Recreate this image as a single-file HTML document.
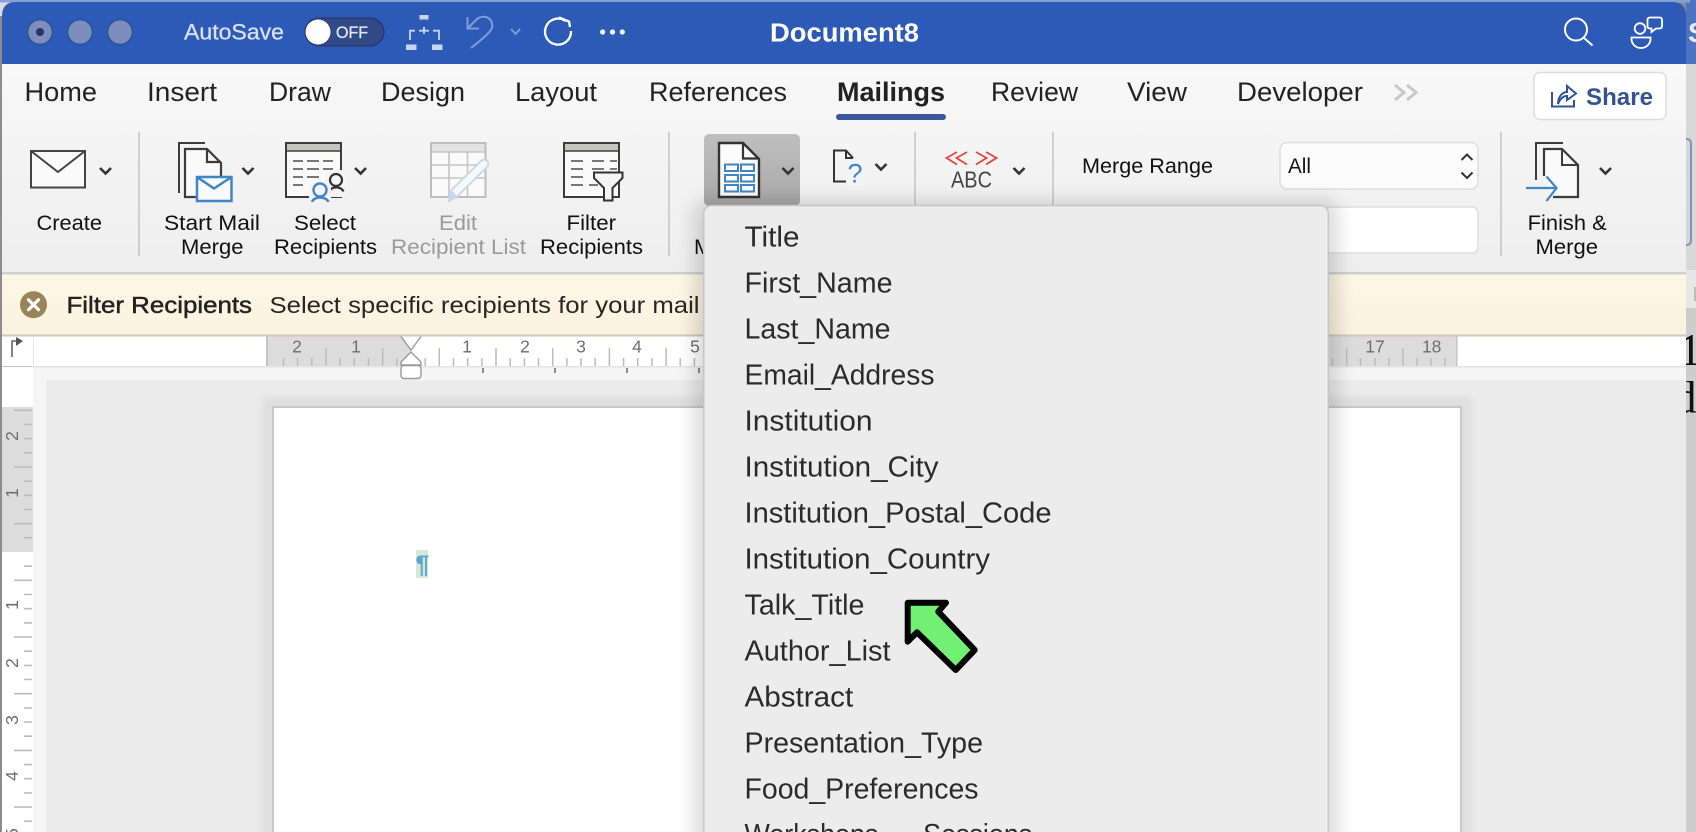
<!DOCTYPE html>
<html lang="en"><head><meta charset="utf-8"><title>Document8</title>
<style>
html,body{margin:0;padding:0;background:#fff;width:1696px;height:832px;overflow:hidden}
svg{display:block}
text{font-family:"Liberation Sans",sans-serif;white-space:pre}
.tab{font-size:26.5px;fill:#222}
.rb{font-size:21.5px;fill:#111}
.dis{fill:#9a9a9a}
.mi{font-size:28.5px;fill:#2b2b2b}
.rn{font-size:17.5px;fill:#6e6e6e}
.chev{fill:none;stroke:#333;stroke-width:2.6}
.sep{stroke:#cfcfcf;stroke-width:2}
</style></head><body>
<svg xmlns="http://www.w3.org/2000/svg" width="1696" height="832" viewBox="0 0 1696 832">
<defs>
<linearGradient id="rib" x1="0" y1="0" x2="0" y2="1"><stop offset="0" stop-color="#f8f8f8"/><stop offset="1" stop-color="#eeeeee"/></linearGradient>
<linearGradient id="yel" x1="0" y1="0" x2="0" y2="1"><stop offset="0" stop-color="#fef7e3"/><stop offset="1" stop-color="#f9f2de"/></linearGradient>
<linearGradient id="hl" x1="0" y1="0" x2="0" y2="1"><stop offset="0" stop-color="#bfbfbf"/><stop offset="1" stop-color="#a8a8a8"/></linearGradient>
<filter id="sh" x="-10%" y="-10%" width="120%" height="120%"><feGaussianBlur stdDeviation="9"/></filter>
<filter id="sh2" x="-5%" y="-5%" width="110%" height="110%"><feGaussianBlur stdDeviation="4"/></filter>
</defs>

<!-- outside the window -->
<rect width="1696" height="832" fill="#cdcdcd"/>
<rect x="1686" y="0" width="10" height="64" fill="#4b73c2"/>
<text x="1688" y="42" font-size="28" font-weight="bold" fill="#e6ebf6">S</text>
<rect x="1686" y="64" width="10" height="206" fill="#d8d8d8"/>
<rect x="1680" y="139" width="11" height="106" rx="4" fill="#d3d6dc" stroke="#7f92b8" stroke-width="2"/>
<rect x="1686" y="270" width="10" height="38" fill="#e7e7e7"/>
<rect x="1694" y="287" width="2" height="14" fill="#bbb"/>
<text x="1679" y="365" font-size="45" style="font-family:'Liberation Serif',serif" fill="#111">1</text>
<text x="1674" y="412.5" font-size="45" style="font-family:'Liberation Serif',serif" fill="#111">d</text>
<rect x="0" y="0" width="1686" height="832" fill="#8c8c8c"/>
<rect x="0" y="0" width="16" height="16" fill="#dcdcdc"/>

<!-- title bar -->
<rect x="0" y="0" width="1690" height="2.5" fill="#86a0d8"/>
<path d="M2,16 Q2,2 16,2 H1672 Q1686,2 1686,16 V64 H2 Z" fill="#2c5ab6"/>
<g fill="#7a8dbb" stroke="#2f4f98" stroke-width="1.5"><circle cx="40" cy="32" r="12.5"/><circle cx="80" cy="32" r="12.5"/><circle cx="120" cy="32" r="12.5"/></g>
<circle cx="40" cy="32" r="4" fill="#27375f"/>
<text x="184" y="39.5" font-size="22.5" textLength="100" lengthAdjust="spacingAndGlyphs" fill="#d8e0f3" stroke="#d8e0f3" stroke-width=".3">AutoSave</text>
<rect x="305" y="18" width="79" height="28" rx="14" fill="#2f4a86" stroke="#23355f" stroke-width="1"/>
<circle cx="318" cy="32" r="12.5" fill="#fff"/>
<text x="336" y="38" font-size="16.5" textLength="32" lengthAdjust="spacingAndGlyphs" fill="#e4e9f5" stroke="#e4e9f5" stroke-width=".3">OFF</text>
<!-- flow icon -->
<g fill="#c9d5ef"><rect x="419.5" y="15" width="9" height="4.5"/><rect x="406" y="44.5" width="10.5" height="5.5"/><rect x="432" y="44.5" width="10.5" height="5.5"/></g>
<path d="M410,40 V30.7 H415 M419,30.7 H429 M433,30.7 H439 V40 M424,27 V34" fill="none" stroke="#c9d5ef" stroke-width="1.8"/>
<!-- undo -->
<path d="M467.5,17 V28.5 H479 M467.5,28.5 L477,19 C486,13 494,20 492,28 C490,33 480,41 471,48" fill="none" stroke="#7f9cd8" stroke-width="2"/>
<path d="M511,29 L515.6,34 L520,29" fill="none" stroke="#7f9cd8" stroke-width="2"/>
<!-- redo -->
<path d="M565.5,21 A13,13 0 1 0 571,31" fill="none" stroke="#fff" stroke-width="2.3"/>
<path d="M559,17.5 L569,21.5 L570,27" fill="none" stroke="#fff" stroke-width="2.3"/>
<g fill="#fff"><circle cx="602.7" cy="32" r="2.6"/><circle cx="612.5" cy="32" r="2.6"/><circle cx="622.3" cy="32" r="2.6"/></g>
<text x="770" y="41.5" font-size="25.5" font-weight="bold" textLength="149" lengthAdjust="spacingAndGlyphs" fill="#fff">Document8</text>
<circle cx="1576" cy="29.5" r="11" fill="none" stroke="#fff" stroke-width="2"/>
<path d="M1583.5,37.5 L1592.5,45.5" stroke="#fff" stroke-width="2"/>
<circle cx="1640" cy="28.5" r="5.3" fill="none" stroke="#fff" stroke-width="1.8"/>
<path d="M1631.5,37.5 H1650.5 V39 A9.5,9 0 0 1 1631.5,39 Z" fill="none" stroke="#fff" stroke-width="1.8"/>
<path d="M1650,17.5 H1659.5 Q1662,17.5 1662,20 V26 Q1662,28.5 1659.5,28.5 H1656 L1651.5,32 V28.5 H1650 Q1647.5,28.5 1647.5,26 V20 Q1647.5,17.5 1650,17.5 Z" fill="none" stroke="#fff" stroke-width="1.8"/>

<!-- ribbon -->
<rect x="2" y="64" width="1684" height="208" fill="url(#rib)"/>
<rect x="2" y="272" width="1684" height="2.5" fill="#cfcfcf"/>
<text class="tab" x="24.5" y="101" textLength="72.5" lengthAdjust="spacingAndGlyphs">Home</text>
<text class="tab" x="147" y="101" textLength="70" lengthAdjust="spacingAndGlyphs">Insert</text>
<text class="tab" x="269" y="101" textLength="62" lengthAdjust="spacingAndGlyphs">Draw</text>
<text class="tab" x="381" y="101" textLength="84" lengthAdjust="spacingAndGlyphs">Design</text>
<text class="tab" x="515" y="101" textLength="82" lengthAdjust="spacingAndGlyphs">Layout</text>
<text class="tab" x="649" y="101" textLength="138" lengthAdjust="spacingAndGlyphs">References</text>
<text class="tab" x="837" y="101" font-weight="bold" textLength="108" lengthAdjust="spacingAndGlyphs">Mailings</text>
<text class="tab" x="991" y="101" textLength="87" lengthAdjust="spacingAndGlyphs">Review</text>
<text class="tab" x="1127" y="101" textLength="60" lengthAdjust="spacingAndGlyphs">View</text>
<text class="tab" x="1237" y="101" textLength="126" lengthAdjust="spacingAndGlyphs">Developer</text>
<path d="M1395,85 L1404,92.5 L1395,100 M1407,85 L1416,92.5 L1407,100" fill="none" stroke="#c8c8c8" stroke-width="3"/>
<rect x="836" y="114" width="110" height="6" rx="3" fill="#39599c"/>
<rect x="1534" y="72.5" width="132" height="47" rx="6" fill="#fff" stroke="#dcdcdc" stroke-width="1.5"/>
<path d="M1552,92 V106.5 H1574 V100" fill="none" stroke="#2f5597" stroke-width="2"/>
<path d="M1558,104 C1558,96 1563,92 1567,92 V86 L1576,93.5 L1567,100 V96 C1563,96 1560,99 1558,104 Z" fill="none" stroke="#2f5597" stroke-width="2"/>
<text x="1586" y="105" font-size="24.5" font-weight="bold" textLength="67" lengthAdjust="spacingAndGlyphs" fill="#33548f">Share</text>

<!-- Create -->
<rect x="31" y="151" width="54" height="36.5" fill="#fafafa" stroke="#444" stroke-width="2"/>
<path d="M31,151 L58,172 L85,151" fill="none" stroke="#444" stroke-width="2"/>
<path class="chev" d="M100,168 L105.6,173.5 L111,168"/>
<text class="rb" x="36.5" y="230" textLength="65.5" lengthAdjust="spacingAndGlyphs">Create</text>
<line class="sep" x1="139" y1="132" x2="139" y2="256"/>

<!-- Start Mail Merge -->
<path d="M205,143 H179 V193" fill="none" stroke="#3c3c3c" stroke-width="2"/>
<path d="M185,197 V149 H207 L221,163 V197 Z" fill="#fafafa" stroke="#3c3c3c" stroke-width="2.2"/>
<path d="M207,149 V162 H221" fill="none" stroke="#3c3c3c" stroke-width="2.2"/>
<rect x="197" y="177" width="34.5" height="24" fill="#fafafa" stroke="#3f86c8" stroke-width="2.5"/>
<path d="M197,177 L214,188.5 L231.5,177" fill="none" stroke="#3f86c8" stroke-width="2.5"/>
<path class="chev" d="M242.5,168 L248,173.5 L253.5,168"/>
<text class="rb" x="164" y="230" textLength="96" lengthAdjust="spacingAndGlyphs">Start Mail</text>
<text class="rb" x="181" y="254" textLength="62.5" lengthAdjust="spacingAndGlyphs">Merge</text>

<!-- Select Recipients -->
<rect x="286" y="143" width="55" height="54" fill="#fafafa" stroke="#3c3c3c" stroke-width="2"/>
<rect x="287" y="144" width="53" height="7" fill="#c5c5c3"/>
<line x1="286" y1="151" x2="341" y2="151" stroke="#3c3c3c" stroke-width="1.5"/>
<path d="M293,161 H303 M307,161 H319 M323,161 H333 M293,169 H303 M307,169 H319 M323,169 H333 M293,177 H303 M307,177 H319 M293,185 H303" stroke="#777" stroke-width="2"/>
<rect x="325" y="170" width="22" height="27" rx="5" fill="#f4f4f4"/>
<circle cx="336" cy="180" r="6" fill="none" stroke="#333" stroke-width="2.2"/>
<path d="M329.5,191.5 C331,186 341,186 343.5,191.5" fill="none" stroke="#333" stroke-width="2.2"/>
<rect x="309" y="182" width="22" height="21" rx="5" fill="#f4f4f4"/>
<circle cx="320" cy="190" r="6.5" fill="none" stroke="#3f86c8" stroke-width="2.4"/>
<path d="M312,202 C314,196 326,196 328.5,202" fill="none" stroke="#3f86c8" stroke-width="2.4"/>
<path class="chev" d="M355,168 L360.7,173.5 L366,168"/>
<text class="rb" x="294" y="230" textLength="62" lengthAdjust="spacingAndGlyphs">Select</text>
<text class="rb" x="274" y="254" textLength="103" lengthAdjust="spacingAndGlyphs">Recipients</text>

<!-- Edit Recipient List -->
<rect x="431" y="143" width="54.5" height="54" fill="#fafafa" stroke="#bdbdbd" stroke-width="2"/>
<rect x="432" y="144" width="52.5" height="7.5" fill="#e4e4e4"/>
<path d="M431,152 H485.5 M431,165 H485.5 M431,178 H485.5 M449,152 V197 M467.5,152 V197" stroke="#c4c4c4" stroke-width="1.6" fill="none"/>
<path d="M449,201 L451.5,190 L481.5,160.5 Q485,158.5 487.5,161 Q489.5,164 486.5,167.5 L457,196.5 Z" fill="#f5f7fa" stroke="#c2d8ec" stroke-width="1.8"/>
<path d="M449,201 L451.5,190 L457,196.5 Z" fill="#c2d8ec"/>
<text class="rb dis" x="439" y="230" textLength="38" lengthAdjust="spacingAndGlyphs">Edit</text>
<text class="rb dis" x="391" y="254" textLength="135" lengthAdjust="spacingAndGlyphs">Recipient List</text>

<!-- Filter Recipients -->
<rect x="564" y="143" width="55" height="54" fill="#fafafa" stroke="#3c3c3c" stroke-width="2"/>
<rect x="565" y="144" width="53" height="7" fill="#c5c5c3"/>
<line x1="564" y1="151" x2="619" y2="151" stroke="#3c3c3c" stroke-width="1.5"/>
<path d="M571,161 H583 M592,161 H604 M610,161 H617 M571,169 H583 M592,169 H604 M610,169 H617 M571,177 H583 M571,185 H583 M589,185 H598" stroke="#777" stroke-width="2"/>
<path d="M594,172.5 H622.5 V178 L612.5,188 V200.5 H604 V188 L594,178 Z" fill="#f5f5f5" stroke="#333" stroke-width="2"/>
<text class="rb" x="566.5" y="230" textLength="49.5" lengthAdjust="spacingAndGlyphs">Filter</text>
<text class="rb" x="540" y="254" textLength="103" lengthAdjust="spacingAndGlyphs">Recipients</text>
<line class="sep" x1="669" y1="132" x2="669" y2="256"/>
<text class="rb" x="694" y="254">M</text>

<!-- Insert merge field (highlighted) -->
<rect x="704" y="134" width="96" height="72" rx="5" fill="url(#hl)"/>
<path d="M719,143 H743 L759,159 V197 H719 Z" fill="#fbfbfb" stroke="#333" stroke-width="2.4"/>
<path d="M743,143 V158.5 H759" fill="none" stroke="#333" stroke-width="2.2"/>
<g fill="none" stroke="#3f86c8" stroke-width="2"><rect x="725" y="164.5" width="13" height="6.5"/><rect x="741" y="164.5" width="13" height="6.5"/><rect x="725" y="175" width="13" height="6.5"/><rect x="741" y="175" width="13" height="6.5"/><rect x="725" y="185" width="13" height="6.5"/><rect x="741" y="185" width="13" height="6.5"/></g>
<path class="chev" d="M782.5,168 L788,173.5 L793.5,168"/>

<!-- rules -->
<path d="M850,181.5 H834 V150.5 H846 L853,158 M846,150.5 V158 H853" fill="none" stroke="#333" stroke-width="2"/>
<rect x="846" y="159" width="18" height="26" fill="#f4f4f4"/>
<text x="847.5" y="182.5" font-size="27" fill="#3f86c8">?</text>
<path class="chev" d="M875.5,164 L881,169.5 L886.5,164"/>
<line class="sep" x1="915" y1="132" x2="915" y2="206"/>

<!-- ABC -->
<path d="M957,152 L946.5,158 L957,164.5 M967,152 L956.5,158 L967,164.5 M976,152 L986.5,158 L976,164.5 M986,152 L996.5,158 L986,164.5" fill="none" stroke="#e0483c" stroke-width="1.8"/>
<text x="951" y="187.5" font-size="23" textLength="41" lengthAdjust="spacingAndGlyphs" fill="#444">ABC</text>
<path class="chev" d="M1013.5,168 L1019,173.5 L1024.5,168"/>
<line class="sep" x1="1053" y1="132" x2="1053" y2="206"/>

<!-- Merge range -->
<text class="rb" x="1082" y="173" textLength="131" lengthAdjust="spacingAndGlyphs">Merge Range</text>
<rect x="1280" y="142.5" width="198" height="46.5" rx="7" fill="#fbfbfb" stroke="#dedede" stroke-width="1.5"/>
<text class="rb" x="1288" y="173" textLength="23" lengthAdjust="spacingAndGlyphs">All</text>
<path d="M1461.5,160 L1467,154.5 L1472.5,160 M1461.5,172.5 L1467,178 L1472.5,172.5" fill="none" stroke="#333" stroke-width="2"/>
<rect x="1200" y="207" width="278" height="46" rx="6" fill="#fff" stroke="#dedede" stroke-width="1.5"/>
<line class="sep" x1="1501" y1="132" x2="1501" y2="256"/>

<!-- Finish & Merge -->
<path d="M1563,143 H1536 V180" fill="none" stroke="#3c3c3c" stroke-width="2"/>
<path d="M1544,176 V149 H1562 L1578,165 V197 H1553" fill="#fafafa" stroke="#3c3c3c" stroke-width="2.2"/>
<path d="M1562,149 V165 H1578" fill="none" stroke="#3c3c3c" stroke-width="2"/>
<path d="M1526,188 H1556 M1546.5,176.5 L1556.5,188 L1546.5,201" fill="none" stroke="#3f86c8" stroke-width="2.2"/>
<path class="chev" d="M1600,168 L1605.5,173.5 L1611,168"/>
<text class="rb" x="1527.7" y="230" textLength="79" lengthAdjust="spacingAndGlyphs">Finish &amp;</text>
<text class="rb" x="1535.5" y="254" textLength="62.5" lengthAdjust="spacingAndGlyphs">Merge</text>

<!-- message bar -->
<rect x="2" y="274.5" width="1684" height="60.5" fill="url(#yel)"/>
<rect x="2" y="334.5" width="1684" height="2" fill="#cfc9b7"/>
<circle cx="33.5" cy="304.7" r="13.5" fill="#9a8356"/>
<path d="M28.5,299.7 L38.5,309.7 M38.5,299.7 L28.5,309.7" stroke="#fff" stroke-width="3.2" stroke-linecap="round"/>
<text x="66.5" y="313" font-size="23" textLength="185.5" lengthAdjust="spacingAndGlyphs" fill="#222" stroke="#222" stroke-width=".45">Filter Recipients</text>
<text x="269.5" y="313" font-size="23" textLength="430" lengthAdjust="spacingAndGlyphs" fill="#262626">Select specific recipients for your mail</text>

<!-- horizontal ruler -->
<rect x="2" y="336.5" width="1684" height="30" fill="#fff"/>
<rect x="266" y="336.5" width="145" height="30" fill="#dcdcdc"/>
<rect x="1200" y="336.5" width="257" height="30" fill="#dcdcdc"/>
<rect x="266" y="336.5" width="2" height="30" fill="#c4c4c4"/>
<rect x="1456" y="336.5" width="1.5" height="30" fill="#c4c4c4"/>
<path d="M283.5,358V366 M297.6,358V366 M311.8,358V366 M340.2,358V366 M354.3,358V366 M368.5,358V366 M396.8,358V366 M425.2,358V366 M453.5,358V366 M467.7,358V366 M481.9,358V366 M510.2,358V366 M524.4,358V366 M538.5,358V366 M566.9,358V366 M581,358V366 M595.2,358V366 M623.6,358V366 M637.7,358V366 M651.9,358V366 M680.2,358V366 M694.4,358V366 M326,348V366 M382.7,348V366 M439.3,348V366 M496,348V366 M552.7,348V366 M609.4,348V366 M666.1,348V366 M1332.5,358V366 M1360.5,358V366 M1375,358V366 M1389,358V366 M1417,358V366 M1431,358V366 M1445,358V366 M1346.7,348V366 M1402.9,348V366" stroke="#bcbcbc" stroke-width="1.5" fill="none"/>
<text class="rn" x="297" y="352.5" text-anchor="middle">2</text><text class="rn" x="356" y="352.5" text-anchor="middle">1</text>
<text class="rn" x="467" y="352.5" text-anchor="middle">1</text><text class="rn" x="525" y="352.5" text-anchor="middle">2</text><text class="rn" x="581" y="352.5" text-anchor="middle">3</text><text class="rn" x="637" y="352.5" text-anchor="middle">4</text><text class="rn" x="695" y="352.5" text-anchor="middle">5</text>
<text class="rn" x="1375" y="352.5" text-anchor="middle">17</text><text class="rn" x="1431.7" y="352.5" text-anchor="middle">18</text>

<!-- canvas -->
<rect x="2" y="367" width="1684" height="465" fill="#fff"/>
<rect x="33" y="367" width="1653" height="465" fill="#f5f5f5"/>
<rect x="33" y="366" width="1653" height="1.5" fill="#e4e4e4"/>
<rect x="46" y="380" width="1640" height="452" fill="#ebebeb"/>
<path d="M483,368V373 M555,368V373 M627,368V373 M699,368V373" stroke="#666" stroke-width="1.5"/>
<rect x="262" y="397" width="1210" height="445" fill="#000" opacity=".05" filter="url(#sh2)"/>
<rect x="273" y="407" width="1188" height="431" fill="#fff" stroke="#c8c8c8" stroke-width="2"/>
<!-- indent markers -->
<path d="M401,336.5 L411,350 L421,336.5" fill="#fff" stroke="#999" stroke-width="1.4"/>
<path d="M411,352 L421,362 V365 H401 V362 Z" fill="#fff" stroke="#999" stroke-width="1.4"/>
<rect x="401" y="365.5" width="20" height="13" rx="3" fill="#fff" stroke="#999" stroke-width="1.4"/>
<!-- tab selector -->
<path d="M12,357 V341 H17" fill="none" stroke="#666" stroke-width="1.6"/>
<path d="M16,337 L23,341 L16,346 Z" fill="#555"/>
<rect x="33" y="336.5" width="1" height="30" fill="#e8e8e8"/>

<!-- vertical ruler -->
<rect x="2" y="407" width="31" height="145" fill="#dcdcdc"/>
<path d="M24,424.5H32 M24,438.6H32 M24,452.8H32 M24,481.2H32 M24,495.3H32 M24,509.5H32 M24,537.8H32 M24,566.2H32 M24,594.5H32 M24,608.7H32 M24,622.9H32 M24,651.2H32 M24,665.4H32 M24,679.5H32 M24,707.9H32 M24,722H32 M24,736.2H32 M24,764.6H32 M24,778.7H32 M24,792.9H32 M24,821.2H32 M14,410.3H32 M14,467H32 M14,523.7H32 M14,580.3H32 M14,637H32 M14,693.7H32 M14,750.4H32 M14,807.1H32" stroke="#bcbcbc" stroke-width="1.6" fill="none"/>
<text class="rn" text-anchor="middle" transform="translate(18,436) rotate(-90)">2</text>
<text class="rn" text-anchor="middle" transform="translate(18,493) rotate(-90)">1</text>
<text class="rn" text-anchor="middle" transform="translate(18,605) rotate(-90)">1</text>
<text class="rn" text-anchor="middle" transform="translate(18,663) rotate(-90)">2</text>
<text class="rn" text-anchor="middle" transform="translate(18,720) rotate(-90)">3</text>
<text class="rn" text-anchor="middle" transform="translate(18,776) rotate(-90)">4</text>
<text class="rn" text-anchor="middle" transform="translate(18,833) rotate(-90)">5</text>

<!-- pilcrow -->
<rect x="416" y="550" width="12" height="28" fill="#d8e9d2"/>
<text x="415.5" y="573" font-size="25" font-weight="bold" fill="#5ba6d6">¶</text>

<!-- dropdown menu -->
<rect x="694" y="200" width="644" height="660" rx="10" fill="#000" opacity=".14" filter="url(#sh)"/>
<rect x="703.7" y="205.5" width="624.6" height="640" rx="8" fill="#ececec" stroke="#c6c6c6" stroke-width="1.4"/>
<text class="mi" x="744.5" y="246.7" textLength="55" lengthAdjust="spacingAndGlyphs">Title</text>
<text class="mi" x="744.5" y="292.7" textLength="148" lengthAdjust="spacingAndGlyphs">First_Name</text>
<text class="mi" x="744.5" y="338.7" textLength="146" lengthAdjust="spacingAndGlyphs">Last_Name</text>
<text class="mi" x="744.5" y="384.7" textLength="190" lengthAdjust="spacingAndGlyphs">Email_Address</text>
<text class="mi" x="744.5" y="430.7" textLength="128" lengthAdjust="spacingAndGlyphs">Institution</text>
<text class="mi" x="744.5" y="476.7" textLength="194" lengthAdjust="spacingAndGlyphs">Institution_City</text>
<text class="mi" x="744.5" y="522.7" textLength="307" lengthAdjust="spacingAndGlyphs">Institution_Postal_Code</text>
<text class="mi" x="744.5" y="568.7" textLength="245.5" lengthAdjust="spacingAndGlyphs">Institution_Country</text>
<text class="mi" x="744.5" y="614.7" textLength="120" lengthAdjust="spacingAndGlyphs">Talk_Title</text>
<text class="mi" x="744.5" y="660.7" textLength="146" lengthAdjust="spacingAndGlyphs">Author_List</text>
<text class="mi" x="744.5" y="706.7" textLength="108.7" lengthAdjust="spacingAndGlyphs">Abstract</text>
<text class="mi" x="744.5" y="752.7" textLength="238.5" lengthAdjust="spacingAndGlyphs">Presentation_Type</text>
<text class="mi" x="744.5" y="798.7" textLength="234" lengthAdjust="spacingAndGlyphs">Food_Preferences</text>
<text class="mi" x="744.5" y="844" textLength="287.7" lengthAdjust="spacingAndGlyphs">Workshops___Sessions</text>

<!-- green arrow -->
<path d="M907.7,602.7 L946,602.7 L938.3,611.7 L974.7,650 L955.7,670 L917,632.3 L907.7,641.7 Z" fill="#72f073" stroke="#000" stroke-width="6" stroke-linejoin="round"/>
</svg>
</body></html>
